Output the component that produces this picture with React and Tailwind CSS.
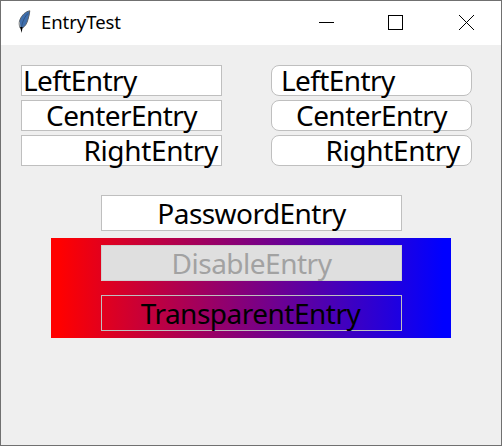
const base = "flex items-center border whitespace-nowrap text-[28px]";

function Entry({ className, textClass, children }) {
  return (
    <div className={`${base} ${className}`}>
      <span className={textClass}>{children}</span>
    </div>
  );
}

const small = "h-[31px] w-[201px] leading-[29px] border-[#bfbfbf] bg-white text-black";
const large = "h-[36px] w-[301px] leading-[34px] justify-center";

function Feather() {
  return (
    <svg className="ml-[17px] mt-[9px] h-6 w-[14px] shrink-0" viewBox="0 0 14 24">
      <path d="M11.800 0.800 C7.500 1.500 4 5 2 9.500 C0.800 12.500 1 15.500 2.200 18 L4.500 18 C7 16.500 9 13.500 10 9.500 C11 6.500 11.500 3.500 11.800 0.800Z" fill="#3f6fae" stroke="#55595e" strokeWidth="0.900" />
      <path d="M10.500 3 C7 6 4.500 11 3.300 18" fill="none" stroke="#2b4b78" strokeWidth="0.800" />
      <path d="M1.300 12 L2.200 17.500" stroke="#b5b5ae" strokeWidth="0.800" />
      <path d="M2.100 17 L4.600 17 L3.600 23Z" fill="#000" />
    </svg>
  );
}

export default function App() {
  return (
    <div className="flex h-[446px] w-[502px] flex-col overflow-hidden border border-[#707070] bg-[#efefef] font-['Noto_Sans','Open_Sans',sans-serif]">
      <header className="flex h-[44px] shrink-0 bg-white">
        <Feather />
        <span className="ml-[9px] w-[278px] text-[18.5px] leading-[42px] tracking-[-0.05px] text-black">EntryTest</span>
        <svg className="h-[44px] w-[182px] shrink-0" viewBox="319 1 182 44" shapeRendering="crispEdges" fill="none" stroke="#000">
          <path d="M319 22.500H334" />
          <path d="M388.500 15.500H402.500V29.500H388.500Z" />
          <path d="M459 15L474 30M474 15L459 30" shapeRendering="auto" />
        </svg>
      </header>
      <div className="mt-5 ml-5 flex gap-[49px]">
        <div className="flex flex-col gap-1">
          <Entry className={`${small} pl-px`} textClass="tracking-[-0.6px]">LeftEntry</Entry>
          <Entry className={`${small} justify-center`} textClass="tracking-[-0.55px]">CenterEntry</Entry>
          <Entry className={`${small} justify-end pr-[3px]`} textClass="tracking-[-0.35px]">RightEntry</Entry>
        </div>
        <div className="flex flex-col gap-1">
          <Entry className={`${small} rounded-lg pl-[9px]`} textClass="tracking-[-0.6px]">LeftEntry</Entry>
          <Entry className={`${small} justify-center rounded-lg`} textClass="tracking-[-0.55px]">CenterEntry</Entry>
          <Entry className={`${small} justify-end rounded-lg pr-[11px]`} textClass="tracking-[-0.35px]">RightEntry</Entry>
        </div>
      </div>
      <div className="mt-[29px] ml-[100px]">
        <Entry className={`${large} border-[#bfbfbf] bg-white text-black`} textClass="tracking-[-0.55px]">PasswordEntry</Entry>
      </div>
      <div className="mt-[7px] ml-[50px] flex h-[100px] w-[400px] flex-col gap-[14px] bg-[linear-gradient(to_right,#f00_2%,#00f_98%)] pt-[7px] pl-[50px]">
        <Entry className={`${large} border-[#d0d0d0] bg-[#dfdfdf] text-[#a2a2a2]`} textClass="tracking-[-0.5px]">DisableEntry</Entry>
        <Entry className={`${large} border-[#bfbfbf] pr-[2px] text-black`} textClass="tracking-[-0.5px]">TransparentEntry</Entry>
      </div>
    </div>
  );
}
